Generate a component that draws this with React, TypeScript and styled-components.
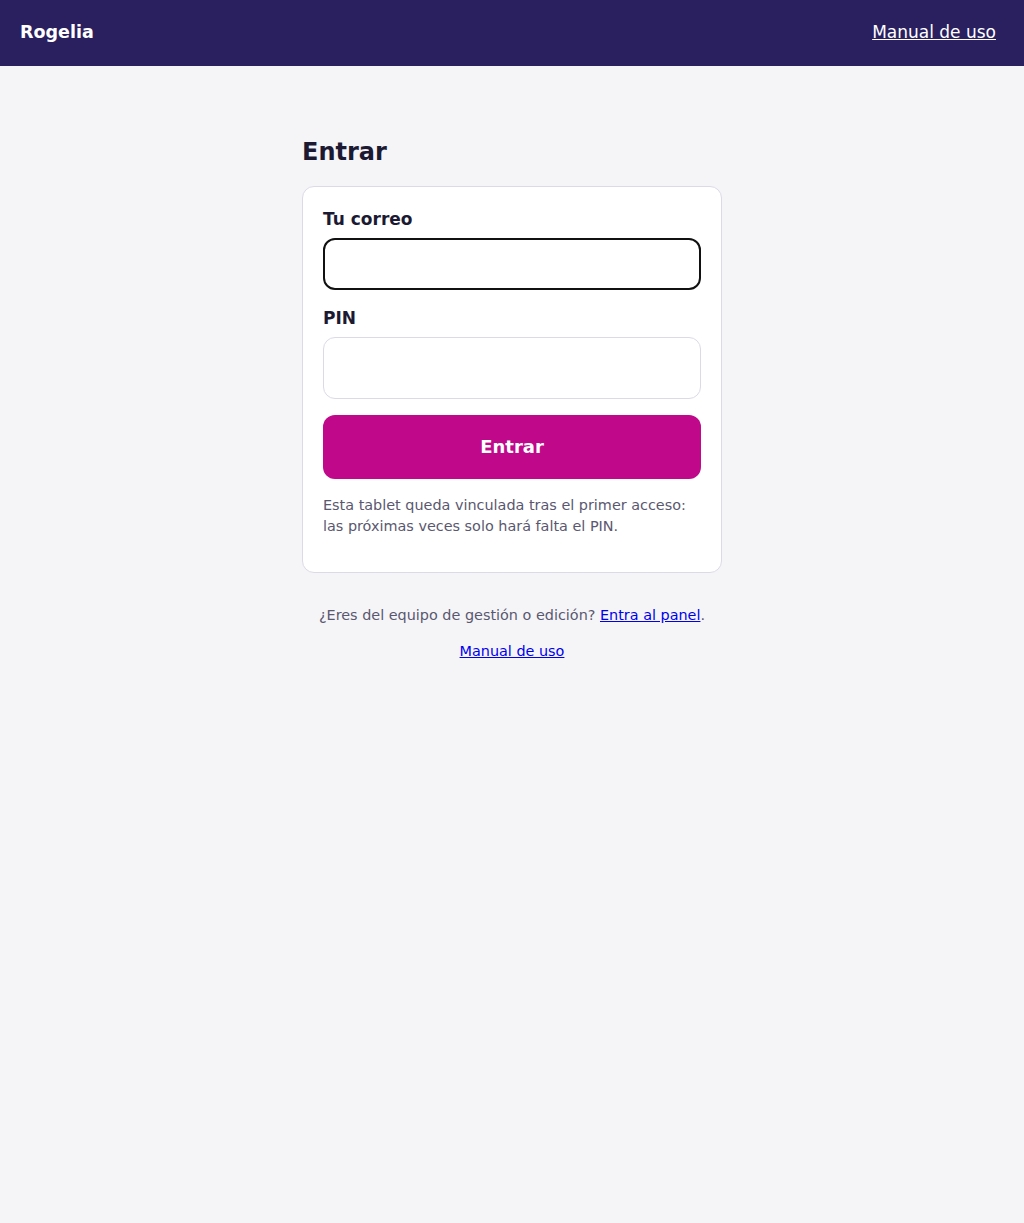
import styled, { createGlobalStyle } from 'styled-components';

const GlobalStyle = createGlobalStyle`
  html, body {
    margin: 0;
    padding: 0;
    background: #f5f5f8;
    font-family: "DejaVu Sans", sans-serif;
    color: #1c1a33;
  }
  * {
    box-sizing: border-box;
  }
`;

export default function App() {
  return (
    <>
      <GlobalStyle />
      <Header>
        <Brand>Rogelia</Brand>
        <HeaderLink href="#">Manual de uso</HeaderLink>
      </Header>

      <Main>
        <Title>Entrar</Title>
        <Card>
          <Field>
            <Label htmlFor="email">Tu correo</Label>
            <Input id="email" type="email" autoFocus $focused />
          </Field>
          <Field>
            <Label htmlFor="pin">PIN</Label>
            <Input id="pin" type="password" inputMode="numeric" $tall />
          </Field>
          <SubmitButton type="button">Entrar</SubmitButton>
          <Note>
            Esta tablet queda vinculada tras el primer acceso: las próximas veces solo hará falta el PIN.
          </Note>
        </Card>

        <FooterText>
          ¿Eres del equipo de gestión o edición? <BlueLink href="#">Entra al panel</BlueLink>.
        </FooterText>
        <FooterText>
          <BlueLink href="#">Manual de uso</BlueLink>
        </FooterText>
      </Main>
    </>
  );
}

const Header = styled.header`
  display: flex;
  align-items: center;
  justify-content: space-between;
  height: 66px;
  padding: 0 28px 2px 20px;
  background: #2a2060;
`;

const Brand = styled.div`
  color: #fff;
  font-size: 17.5px;
  font-weight: 700;
`;

const HeaderLink = styled.a`
  color: #fff;
  font-size: 17px;
  text-decoration: underline;
`;

const Main = styled.main`
  width: 420px;
  margin: 0 auto;
  padding-top: 72px;
`;

const Title = styled.h1`
  font-size: 24px;
  line-height: 29px;
  font-weight: 700;
  margin: 0 0 19px;
`;

const Card = styled.section`
  background: #fff;
  border: 1px solid #dcdae6;
  border-radius: 12px;
  padding: 21px 20px 20px;
`;

const Field = styled.div`
  display: flex;
  flex-direction: column;
  margin-bottom: 17px;
`;

const Label = styled.label`
  font-size: 17px;
  line-height: 22px;
  font-weight: 700;
  margin-bottom: 8px;
`;

const Input = styled.input<{ $focused?: boolean; $tall?: boolean }>`
  width: 100%;
  height: ${({ $tall }) => ($tall ? '62px' : '52px')};
  border: ${({ $focused }) => ($focused ? '2px solid #111' : '1px solid #dcdae6')};
  border-radius: 12px;
  padding: 0 16px;
  font-family: inherit;
  font-size: 17px;
  background: #fff;
  outline: none;
`;

const SubmitButton = styled.button`
  width: 100%;
  height: 64px;
  margin-top: -1px;
  padding-bottom: 2px;
  border: none;
  border-radius: 12px;
  background: #c0088a;
  color: #fff;
  font-family: inherit;
  font-size: 18px;
  font-weight: 700;
  cursor: pointer;
`;

const Note = styled.p`
  font-size: 14.4px;
  line-height: 21px;
  color: #5a5870;
  margin: 16px 0 15px;
`;

const FooterText = styled.p`
  text-align: center;
  font-size: 14.4px;
  line-height: 21px;
  color: #5a5870;
  margin: 32px 0 15px;

  & + & {
    margin-top: 0;
  }
`;

const BlueLink = styled.a`
  color: #0000ee;
  text-decoration: underline;
`;
